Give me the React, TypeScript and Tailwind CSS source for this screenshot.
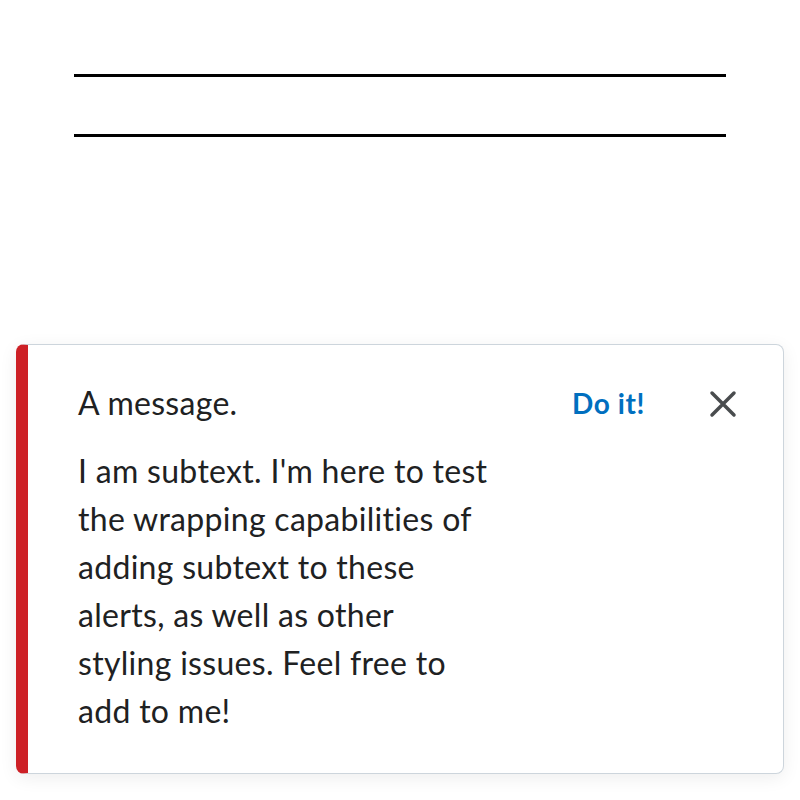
import React from 'react';

const CloseIcon = () => (
  <svg width="28" height="28" viewBox="0 0 28 28" fill="none">
    <path d="M3 3L25 25M25 3L3 25" stroke="#494c4e" strokeWidth="3.5" strokeLinecap="round" />
  </svg>
);

const App = () => {
  return (
    <div className="w-[800px] h-[800px] bg-white font-['Lato',sans-serif] text-[#202122]">
      <div className="px-[74px] pt-[74px]">
        <div className="h-[3px] bg-black"></div>
        <div className="h-[57px]"></div>
        <div className="h-[3px] bg-black"></div>
      </div>

      <div className="mx-4 mt-[207px] rounded-lg border border-[#cdd5dc] border-l-[12px] border-l-[#cd2026] bg-white shadow-[0_4px_18px_rgba(0,0,0,0.07)]">
        <div className="flex items-start pl-[50px] pr-[46px] pt-[34px] pb-[38px]">
          <div className="flex-1">
            <p className="text-[32px] leading-[48px] tracking-[0.3px]">A message.</p>
            <p className="mt-5 max-w-[412px] text-[32px] leading-[48px] tracking-[0.3px]">
              I am subtext. I'm here to test the wrapping capabilities of adding subtext to these alerts, as well as other styling issues. Feel free to add to me!
            </p>
          </div>
          <button className="mt-[10px] text-[28px] font-bold leading-[28px] tracking-[0.6px] text-[#006fbf]">
            Do it!
          </button>
          <button className="ml-[64px] mt-[11px]">
            <CloseIcon />
          </button>
        </div>
      </div>
    </div>
  );
};

export default App;
